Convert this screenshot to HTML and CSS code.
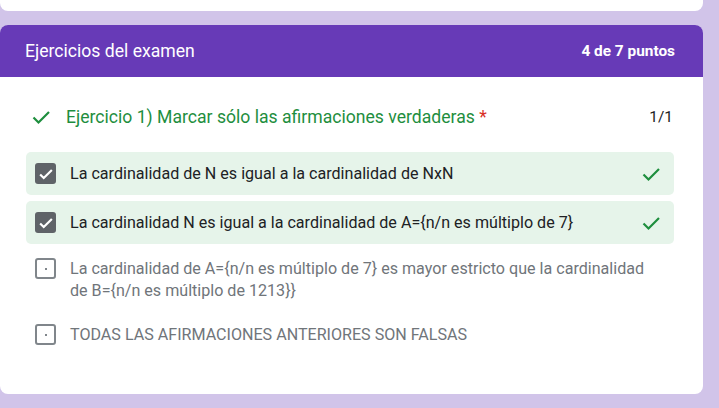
FILE: index.html
```html
<!DOCTYPE html>
<html lang="es">
<head>
<meta charset="utf-8">
<title>Ejercicios del examen</title>
<link rel="stylesheet" href="styles.css">
</head>
<body>
<div class="page">
  <div class="top-card"></div>
  <section class="card">
    <header class="card-header">
      <h2 class="card-title">Ejercicios del examen</h2>
      <span class="card-score">4 de 7 puntos</span>
    </header>
    <div class="card-body">
      <div class="question">
        <svg class="q-check" viewBox="0 0 24 24" width="24" height="24"><path d="M4.5 12.5l5 5L20 7" fill="none" stroke="#1e8e3e" stroke-width="2.2"/></svg>
        <span class="q-text">Ejercicio 1) Marcar sólo las afirmaciones verdaderas <span class="req">*</span></span>
        <span class="q-score">1/1</span>
      </div>
      <div class="options">
        <div class="option correct">
          <span class="box checked"><svg viewBox="0 0 20 20" width="18" height="18"><path d="M3.5 10.5l4 4L16.5 5.5" fill="none" stroke="#fff" stroke-width="2.4"/></svg></span>
          <span class="opt-text">La cardinalidad de N es igual a la cardinalidad de NxN</span>
          <svg class="opt-mark" viewBox="0 0 24 24" width="24" height="24"><path d="M4.5 12.5l5 5L20 7" fill="none" stroke="#1e8e3e" stroke-width="2.2"/></svg>
        </div>
        <div class="option correct">
          <span class="box checked"><svg viewBox="0 0 20 20" width="18" height="18"><path d="M3.5 10.5l4 4L16.5 5.5" fill="none" stroke="#fff" stroke-width="2.4"/></svg></span>
          <span class="opt-text">La cardinalidad N es igual a la cardinalidad de A={n/n es múltiplo de 7}</span>
          <svg class="opt-mark" viewBox="0 0 24 24" width="24" height="24"><path d="M4.5 12.5l5 5L20 7" fill="none" stroke="#1e8e3e" stroke-width="2.2"/></svg>
        </div>
        <div class="option plain">
          <span class="box empty"><span class="dot"></span></span>
          <span class="opt-text">La cardinalidad de A={n/n es múltiplo de 7} es mayor estricto que la cardinalidad de B={n/n es múltiplo de 1213}}</span>
        </div>
        <div class="option plain">
          <span class="box empty"><span class="dot"></span></span>
          <span class="opt-text">TODAS LAS AFIRMACIONES ANTERIORES SON FALSAS</span>
        </div>
      </div>
    </div>
  </section>
</div>
</body>
</html>
```
FILE: styles.css
```css
* { box-sizing: border-box; }
html, body {
  margin: 0;
  padding: 0;
  background: #d1c4e9;
  font-family: Roboto, "Liberation Sans", Arial, sans-serif;
  height: 408px;
  overflow: hidden;
}
.page {
  width: 703px;
}
.top-card {
  height: 11px;
  background: #fff;
  border-radius: 0 0 8px 8px;
}
.card {
  margin-top: 14px;
  background: #fff;
  border-radius: 8px;
  overflow: hidden;
  height: 369px;
}
.card-header {
  height: 52px;
  background: #673ab7;
  color: #fff;
  display: flex;
  align-items: center;
  justify-content: space-between;
  padding: 0 28px 0 25px;
}
.card-title {
  margin: 0;
  font-size: 17.6px;
  font-weight: 400;
}
.card-score {
  font-size: 15.4px;
  font-weight: 700;
}
.card-body {
  padding: 28px 29px 0 26px;
}
.question {
  display: flex;
  align-items: center;
  height: 24px;
  padding-left: 3px;
}
.q-check {
  flex: none;
  margin-right: 13px;
}
.q-text {
  flex: 1;
  font-size: 17.6px;
  color: #1e8e3e;
}
.req { color: #d93025; }
.q-score {
  font-size: 15.4px;
  color: #202124;
  padding-right: 1px;
}
.options {
  margin-top: 23px;
  display: flex;
  flex-direction: column;
  gap: 6px;
}
.option {
  display: flex;
  align-items: center;
  border-radius: 5px;
  padding: 0 11px 0 9px;
  font-size: 16.1px;
  line-height: 22px;
}
.option.correct {
  background: #e6f4ea;
  height: 43px;
  color: #202124;
}
.option.plain {
  color: #70757a;
  align-items: flex-start;
  padding: 8px 24px 8px 9px;
}
.box {
  flex: none;
  width: 21px;
  height: 21px;
  border-radius: 3px;
  display: flex;
  align-items: center;
  justify-content: center;
  margin-right: 14px;
}
.box.checked {
  background: #5f6368;
}
.box.empty {
  border: 2px solid #80868b;
}
.dot {
  width: 2px;
  height: 2px;
  background: #80868b;
}
.opt-text {
  flex: 1;
}
.opt-mark {
  flex: none;
}
```
